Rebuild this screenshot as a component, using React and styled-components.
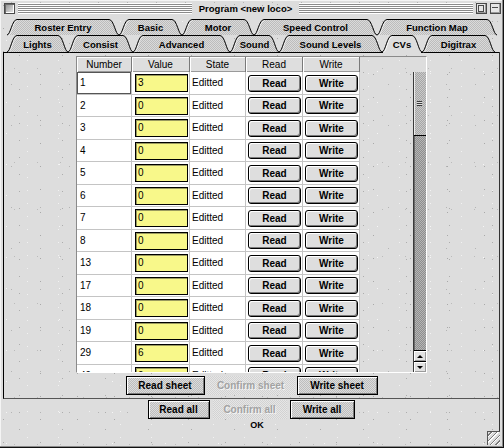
import React from "react";
import styled, { createGlobalStyle, css } from "styled-components";

const GlobalStyle = createGlobalStyle`
  html, body { margin: 0; padding: 0; background: #dddddd; }
  body { font-family: "Liberation Sans", Arial, sans-serif; color: #000; }
  * { box-sizing: border-box; }
`;

const dot = (c) => `conic-gradient(at 1px 1px, transparent 75%, ${c} 0)`;

const dotted = css`
  background-color: #dddddd;
  background-image:
    ${dot("#a9a9a9")}, ${dot("#b4b4b4")}, ${dot("#f6f6f6")},
    ${dot("#adadad")}, ${dot("#bbbbbb")}, ${dot("#f2f2f2")};
  background-size: 37px 23px, 29px 41px, 53px 31px, 43px 17px, 23px 47px, 31px 13px;
  background-position: 3px 5px, 11px 2px, 6px 9px, 19px 4px, 14px 21px, 27px 8px;
`;

const checker = (a, b) => css`
  background: repeating-conic-gradient(${a} 0 25%, ${b} 0 50%) 0 0 / 2px 2px;
`;

const Window = styled.div`
  position: relative;
  width: 504px;
  height: 448px;
  display: flex;
  flex-direction: column;
  overflow: hidden;
  ${dotted}
  box-shadow: inset -1px -1px 0 #111, inset -2px -2px 0 #8a8a8a, inset 1px 1px 0 #f4f4f4;
`;

const TitleBar = styled.div`
  height: 17px;
  flex: none;
  display: flex;
  align-items: center;
  padding: 0 3px 0 4px;
  gap: 3px;
`;

const CloseBox = styled.div`
  width: 11px;
  height: 11px;
  flex: none;
  border: 1px solid #4a4a4a;
  background: linear-gradient(135deg, #8c8c8c, #eeeeee);
  box-shadow: inset 1px 1px 0 #6c6c6c, inset -1px -1px 0 #ffffff;
`;

const Stripes = styled.div`
  flex: 1;
  height: 11px;
  background: repeating-linear-gradient(to bottom, #ffffff 0 1px, #8a8a8a 1px 2px);
`;

const Title = styled.div`
  flex: none;
  padding: 0 4px;
  font-size: 9.5px;
  font-weight: bold;
  line-height: 17px;
  white-space: nowrap;
`;

const WidgetBox = styled.div`
  position: relative;
  width: 11px;
  height: 11px;
  flex: none;
  border: 1px solid #4a4a4a;
  background: #e6e6e6;
  box-shadow: inset -1px -1px 0 #9a9a9a;
  &::after {
    content: "";
    position: absolute;
    left: 1px;
    right: 2px;
    top: ${(p) => (p.$kind === "zoom" ? "1px" : "3px")};
    height: ${(p) => (p.$kind === "zoom" ? "5px" : "0")};
    border: 1px solid #4a4a4a;
    border-width: ${(p) => (p.$kind === "zoom" ? "1px" : "1px 0 0 0")};
  }
`;

const TabArea = styled.div`
  position: relative;
  z-index: 2;
  height: 35px;
  flex: none;
  padding: 2px 0 0 7px;
  display: flex;
  flex-direction: column;
`;

const TabRow = styled.div`
  display: flex;
  height: ${(p) => (p.$back ? "16px" : "17px")};
`;

const TabBox = styled.div`
  position: relative;
  flex: none;
  width: ${(p) => p.$w}px;
  height: 100%;
  display: flex;
  align-items: center;
  justify-content: center;
  & > svg {
    position: absolute;
    left: 0;
    top: 0;
    overflow: visible;
  }
`;

const TabLabel = styled.span`
  position: relative;
  font-size: 9.5px;
  font-weight: bold;
  padding-top: 1px;
  white-space: nowrap;
`;

function Tab({ label, w, h, active }) {
  const s = 10;
  const shape = `M0,${h} C3.5,${h} 5,0.5 ${s},0.5 L${w - s},0.5 C${w - 5},0.5 ${w - 3.5},${h} ${w},${h}`;
  return (
    <TabBox $w={w}>
      <svg width={w} height={h} viewBox={`0 0 ${w} ${h}`}>
        <path d={shape + " Z"} fill={active ? "#dddddd" : "url(#tabChk)"} />
        {active && <rect x="1" y={h - 1} width={w - 2} height="2.5" fill="#dddddd" />}
        <path d={`M1.5,${h} C4.5,${h} 6,1.5 ${s + 0.5},1.5`} fill="none" stroke="#ffffff" strokeWidth="1" opacity={active ? 1 : 0.7} />
        <path d={shape} fill="none" stroke="#000" strokeWidth="1" />
      </svg>
      <TabLabel>{label}</TabLabel>
    </TabBox>
  );
}

const Defs = styled.svg`
  position: absolute;
  width: 0;
  height: 0;
`;

const Content = styled.div`
  flex: none;
  height: 380px;
  margin: 0 4px 0 3px;
  border-right: 1px solid #333;
  display: flex;
  flex-direction: column;
`;

const Panel = styled.div`
  flex: none;
  border-left: 1px solid #000;
  border-top: 1px solid #000;
  border-bottom: 1px solid #555;
  padding: 3px 0 3px 72px;
  display: flex;
  flex-direction: column;
`;

const Pane = styled.div`
  align-self: flex-start;
  display: grid;
  grid-template-columns: 336px 13px;
  grid-template-rows: 15px 300px;
  border-left: 1px solid #8a8a8a;
  border-top: 1px solid #8a8a8a;
  border-right: 1px solid #ffffff;
  border-bottom: 1px solid #ffffff;
`;

const Header = styled.div`
  display: flex;
`;

const HeadCell = styled.div`
  width: ${(p) => p.$w}px;
  flex: none;
  height: 15px;
  background: #dedede;
  border-right: 1px solid #7a7a7a;
  box-shadow: inset 1px 1px 0 #ffffff, inset 0 -1px 0 #9a9a9a;
  font-size: 10px;
  line-height: 15px;
  text-align: center;
`;

const Viewport = styled.div`
  overflow: hidden;
`;

const Row = styled.div`
  display: flex;
  height: 22.5px;
  width: 283px;
`;

const Cell = styled.div`
  width: ${(p) => p.$w}px;
  flex: none;
  height: 100%;
  background: #ffffff;
  border-right: 1px solid #c4c4c4;
  border-bottom: 1px solid #c4c4c4;
  display: flex;
  align-items: center;
  padding: ${(p) => p.$pad || "0 0 0 3px"};
  font-size: 10px;
  box-shadow: ${(p) => (p.$focus ? "inset 0 0 0 1px #555" : "none")};
`;

const ValueBox = styled.div`
  width: 53px;
  height: 18px;
  border: 1px solid #000;
  background: #f8f88a;
  box-shadow: inset 1px 1px 0 #9a9a60;
  font-size: 10px;
  line-height: 16px;
  padding-left: 2px;
`;

const RowButton = styled.div`
  width: 53px;
  height: 17px;
  margin-top: 1px;
  border: 1px solid #000;
  border-radius: 3px;
  background: #dedede;
  box-shadow: inset 1px 1px 0 #ffffff, inset -1px -1px 0 #7a7a7a;
  font-size: 10px;
  font-weight: bold;
  line-height: 15px;
  text-align: center;
`;

const Corner = styled.div``;

const ScrollBar = styled.div`
  display: flex;
  flex-direction: column;
  border-left: 1px solid #3a3a3a;
`;

const Thumb = styled.div`
  position: relative;
  height: 64px;
  flex: none;
  ${checker("#a6a6a6", "#cacaca")}
  border-bottom: 1px solid #000;
  box-shadow: inset 1px 0 0 #ececec;
  &::after {
    content: "";
    position: absolute;
    left: 3px;
    top: 29px;
    width: 5px;
    height: 5px;
    background: repeating-linear-gradient(to bottom, #3a3a3a 0 1px, #e0e0e0 1px 2px);
  }
`;

const Track = styled.div`
  flex: 1;
  ${checker("#8e8e8e", "#b6b6b6")}
  box-shadow: inset 1px 0 0 #6a6a6a;
`;

const Arrow = styled.div`
  height: 11px;
  flex: none;
  border-top: 1px solid #000;
  background: #e2e2e2;
  box-shadow: inset 1px 1px 0 #ffffff, inset -1px -1px 0 #9a9a9a;
  display: flex;
  align-items: center;
  justify-content: center;
  &::before {
    content: "";
    width: 0;
    height: 0;
    border-left: 3px solid transparent;
    border-right: 3px solid transparent;
    ${(p) => (p.$down ? "border-top: 3px solid #000;" : "border-bottom: 3px solid #000;")}
  }
`;

const ButtonRow = styled.div`
  display: flex;
  justify-content: center;
  gap: ${(p) => p.$gap || 2}px;
  margin: ${(p) => p.$m || "0"};
`;

const BarButton = styled.div`
  width: ${(p) => p.$w}px;
  height: 19px;
  flex: none;
  font-size: 10px;
  font-weight: bold;
  line-height: 17px;
  text-align: center;
  white-space: nowrap;
  border: 1px solid ${(p) => (p.$disabled ? "transparent" : "#000")};
  color: ${(p) => (p.$disabled ? "#a2a2a2" : "#000")};
  text-shadow: ${(p) => (p.$disabled ? "1px 1px 0 #f4f4f4" : "none")};
  ${(p) => (p.$disabled ? checker("#d2d2d2", "#e6e6e6") : checker("#bdbdbd", "#dcdcdc"))}
  box-shadow: ${(p) => (p.$disabled ? "none" : "inset 1px 1px 0 #ffffff, inset -1px -1px 0 #7a7a7a")};
`;

const OkLabel = styled.div`
  text-align: center;
  padding-left: 12px;
  font-size: 9px;
  font-weight: bold;
  line-height: 11px;
  margin-top: 1px;
`;

const GrowBox = styled.div`
  position: absolute;
  right: 4px;
  bottom: 3px;
  width: 13px;
  height: 14px;
  border-top: 1px solid #555;
  border-left: 1px solid #555;
  background: repeating-linear-gradient(135deg, #dddddd 0 2px, #7a7a7a 2px 3px, #ffffff 3px 4px);
`;

const row1 = [
  ["Roster Entry", 112],
  ["Basic", 63],
  ["Motor", 72],
  ["Speed Control", 123],
  ["Function Map", 120],
];

const row2 = [
  ["Lights", 61],
  ["Consist", 65],
  ["Advanced", 97],
  ["Sound", 49],
  ["Sound Levels", 103],
  ["CVs", 40, true],
  ["Digitrax", 73],
];

const cvs = [
  [1, 3], [2, 0], [3, 0], [4, 0], [5, 0], [6, 0], [7, 0], [8, 0],
  [13, 0], [17, 0], [18, 0], [19, 0], [29, 6], [49, 0], [50, 0],
];

const cols = [55, 58, 56, 57, 57];

export default function App() {
  return (
    <>
      <GlobalStyle />
      <Window>
        <Defs aria-hidden="true">
          <defs>
            <pattern id="tabChk" width="2" height="2" patternUnits="userSpaceOnUse">
              <rect width="2" height="2" fill="#dadada" />
              <rect width="1" height="1" fill="#bcbcbc" />
              <rect x="1" y="1" width="1" height="1" fill="#bcbcbc" />
            </pattern>
          </defs>
        </Defs>
        <TitleBar>
          <CloseBox />
          <Stripes />
          <Title>Program &lt;new loco&gt;</Title>
          <Stripes />
          <WidgetBox $kind="zoom" />
          <WidgetBox $kind="collapse" />
        </TitleBar>
        <TabArea>
          <TabRow $back>
            {row1.map(([l, w]) => (
              <Tab key={l} label={l} w={w} h={16} />
            ))}
          </TabRow>
          <TabRow>
            {row2.map(([l, w, a]) => (
              <Tab key={l} label={l} w={w} h={17} active={a} />
            ))}
          </TabRow>
        </TabArea>
        <Content>
          <Panel>
            <Pane>
              <Header>
                {["Number", "Value", "State", "Read", "Write"].map((t, i) => (
                  <HeadCell key={t} $w={cols[i]}>{t}</HeadCell>
                ))}
              </Header>
              <Corner />
              <Viewport>
                {cvs.map(([n, v], i) => (
                  <Row key={n}>
                    <Cell $w={cols[0]} $focus={i === 0}>{n}</Cell>
                    <Cell $w={cols[1]} $pad="1px 0 0 3px">
                      <ValueBox>{v}</ValueBox>
                    </Cell>
                    <Cell $w={cols[2]} $pad="0 0 0 2px">Editted</Cell>
                    <Cell $w={cols[3]} $pad="0 0 0 2px">
                      <RowButton>Read</RowButton>
                    </Cell>
                    <Cell $w={cols[4]} $pad="0 0 0 2px">
                      <RowButton>Write</RowButton>
                    </Cell>
                  </Row>
                ))}
              </Viewport>
              <ScrollBar>
                <Thumb />
                <Track />
                <Arrow />
                <Arrow $down />
              </ScrollBar>
            </Pane>
            <ButtonRow $m="3px 0 0 -72px">
              <BarButton $w={79}>Read sheet</BarButton>
              <BarButton $w={88} $disabled>Confirm sheet</BarButton>
              <BarButton $w={81}>Write sheet</BarButton>
            </ButtonRow>
          </Panel>
          <ButtonRow $m="1px 0 0 0" $gap={3}>
            <BarButton $w={62}>Read all</BarButton>
            <BarButton $w={74} $disabled>Confirm all</BarButton>
            <BarButton $w={65}>Write all</BarButton>
          </ButtonRow>
          <OkLabel>OK</OkLabel>
        </Content>
        <GrowBox />
      </Window>
    </>
  );
}
